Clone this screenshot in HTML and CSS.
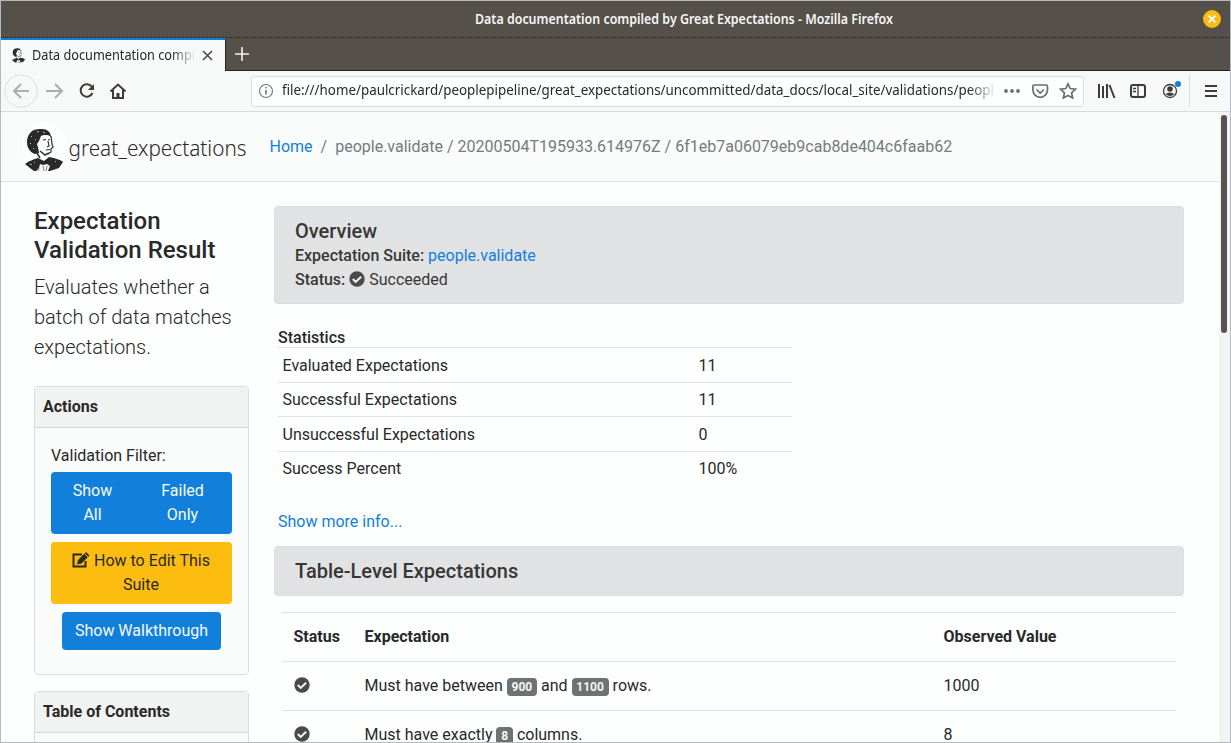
FILE: index.html
```html
<!DOCTYPE html>
<html lang="en">
<head>
<meta charset="utf-8">
<title>Data documentation compiled by Great Expectations</title>
<link rel="stylesheet" href="styles.css">
</head>
<body>
<svg class="defs" width="0" height="0">
  <symbol id="portrait" viewBox="0 0 38 43">
    <path d="M6 3C9 0 13 0 17 0c5 0 9 3 9 8l-5-2-5 1 1 4-3 2-1 4 1 7-4 1C5 23 2 19 2 13c0-4 1-7 4-10z" fill="#292929"/>
    <path d="M16 7q5-2 9 0l1 6 2 5-2 1-1 5-5 1-4-3-3-3-1-4 2-3z" fill="#fbfcfc"/>
    <path d="M18 11l3-.500M23 11l2-.500M23 12l1 5-2 1M21 21l4-.500M26 7l1 8 1 3-2 2v3l-3 2" stroke="#333" fill="none" stroke-width="1.200"/>
    <path d="M12 17v7l3 5M15 22l5 4 4-2" stroke="#333" fill="none" stroke-width="1.600"/>
    <path d="M0 35c4-3 7-4 13-6l6 3 5-4 5 1c4 2 6 1 9 4l-4 6-9 3H9l-4-3z" fill="#292929"/>
    <path d="M15 35l3 1 4-1 3 2-2 5-6 1-6-1 3-3z" fill="#f4f5f5"/>
    <path d="M18 37l1 5M22 37l-1 5M14 39l-1 3" stroke="#888"/>
    <path d="M6 8l1-1M5 14l1 1M12 3l2-.500M18 3l2 1M10 11l1-1M8 19l1 1M9 33l1 1M5 35l2 1M30 32l1 1" stroke="#b5b9ba"/>
  </symbol>
  <symbol id="check" viewBox="0 0 16 16">
    <circle cx="8" cy="8" r="7.700" fill="#4c4a48"/>
    <path d="M3.800 8.100l2.900 2.800 5.400-5.200" fill="none" stroke="#f2f2f2" stroke-width="2.100"/>
  </symbol>
</svg>
<div class="window">
  <div class="titlebar">
    <svg class="title" width="424" height="24"><text x="1" y="17" textLength="418" lengthAdjust="spacingAndGlyphs">Data documentation compiled by Great Expectations - Mozilla Firefox</text></svg>
    <svg class="close" width="20" height="20" viewBox="0 0 20 20"><circle cx="10" cy="10" r="9" fill="#fcbd10"/><path d="M6.500 6.500l7 7m0-7l-7 7" stroke="#f5f5f5" stroke-width="2"/></svg>
  </div>
  <div class="tabs">
    <div class="tab">
      <svg class="favicon" width="13" height="15"><use href="#portrait"/></svg>
      <svg class="tab-label" width="165" height="24"><text x="1" y="16" textLength="163" lengthAdjust="spacingAndGlyphs">Data documentation compi</text></svg>
      <svg class="tab-close" width="11" height="11" viewBox="0 0 11 11"><path d="M1 1l9 9m0-9l-9 9" stroke="#4a4a4a" stroke-width="1.600"/></svg>
    </div>
    <svg class="plus" width="14" height="14"><path d="M7 0v14M0 7h14" stroke="#f2f2f2" stroke-width="1.600"/></svg>
  </div>
  <div class="toolbar">
    <svg class="nav-icons" width="130" height="40" viewBox="0 0 130 40" fill="none" stroke-width="2">
      <circle cx="20" cy="20" r="16.300" stroke="#dcdedf" stroke-width="1"/>
      <path d="M28 20H13m7-7l-7 7 7 7" stroke="#a9afb2"/>
      <path d="M45 20h15m-6-7l7 7-7 7" stroke="#a9afb2"/>
      <path d="M91 16a6.200 6.200 0 1 0 .5 6" stroke="#3f3b38"/>
      <path d="M93 13v6h-6z" fill="#3f3b38"/>
      <path d="M109.500 20.500l7.500-7 7.500 7M112 19v8h10v-8" stroke="#3f3b38"/>
      <path d="M117 27v-5" stroke="#3f3b38" stroke-width="3"/>
    </svg>
    <div class="urlbar">
      <svg width="16" height="16" viewBox="0 0 16 16" fill="none" stroke="#777" stroke-width="1.100"><circle cx="8" cy="8" r="6.500"/><path d="M8 7v4.500M8 4v1.500" stroke-width="1.600"/></svg>
      <svg class="url" width="716" height="24"><text x="1" y="16" textLength="712" lengthAdjust="spacingAndGlyphs">file:///home/paulcrickard/peoplepipeline/great_expectations/uncommitted/data_docs/local_site/validations/peopl</text></svg>
      <svg class="url-icons" width="76" height="18" viewBox="0 0 76 18" fill="none" stroke="#6b6f71" stroke-width="1.700">
        <g fill="#6b6f71" stroke="none"><circle cx="3" cy="9" r="1.900"/><circle cx="9" cy="9" r="1.900"/><circle cx="15" cy="9" r="1.900"/></g>
        <path d="M31 3h12q1.500 0 1.500 1.500V8a7.300 7.300 0 0 1-14.600 0V4.500Q29.900 3 31 3zM33.500 7.500l3.700 3.500 3.700-3.500"/>
        <path d="M65 1.800l2.200 4.700 5.200.7-3.800 3.600 1 5.200-4.600-2.500-4.600 2.500 1-5.200-3.800-3.600 5.200-.7z"/>
      </svg>
    </div>
    <svg class="tool-icons" width="140" height="40" viewBox="0 0 140 40" fill="none" stroke="#3f3b38" stroke-width="2">
      <path d="M12 13v14M16 15v12M20 13v14M22.500 14l5 13"/>
      <rect x="44" y="14" width="14" height="12" rx="2"/><path d="M51 14v12M46 17.500h3M46 20.500h3" stroke-width="1.300"/>
      <circle cx="83" cy="20" r="6.500" stroke-width="1.300"/><circle cx="83" cy="18" r="2.800" fill="#3f3b38" stroke="none"/><path d="M78.500 23q4.500-3 9 0-4.500 4-9 0" fill="#3f3b38" stroke="none"/>
      <circle cx="91" cy="13" r="3" fill="#1280db" stroke="none"/>
      <path d="M102.500 3v33" stroke="#dddfe0" stroke-width="1"/>
      <path d="M118 15h12M118 20h12M118 25h12"/>
    </svg>
  </div>
  <div class="viewport">
    <div class="page">
      <header class="navbar">
        <svg class="brand" width="226" height="52"><circle cx="21" cy="26" r="24" fill="#fdfefe"/><use href="#portrait" x="2" y="8" width="38" height="43"/><text x="45.500" y="35" textLength="178" lengthAdjust="spacingAndGlyphs">great_expectations</text></svg>
        <nav class="crumbs"><a>Home</a><span class="slash">/</span><span>people.validate / 20200504T195933.614976Z / 6f1eb7a06079eb9cab8de404c6faab62</span></nav>
      </header>
      <div class="columns">
        <aside class="sidebar">
          <h4>Expectation Validation Result</h4>
          <p class="lead">Evaluates whether a batch of data matches expectations.</p>
          <section class="card">
            <div class="card-header">Actions</div>
            <div class="card-body">
              <div>Validation Filter:</div>
              <div class="group"><span>Show<br>All</span><span>Failed<br>Only</span></div>
              <div class="btn warning"><svg width="18" height="16" viewBox="0 0 18 16"><path d="M10 2.500H1.500v12h12V9" fill="none" stroke="#292929" stroke-width="2"/><path d="M6 8l8-8 3.500 3.500-8 8L5 12.500z" fill="#292929"/><path d="M12.500 1.500L16 5" stroke="#fcbd10"/></svg> How to Edit This<br>Suite</div>
              <div class="btn walk">Show Walkthrough</div>
            </div>
          </section>
          <section class="card"><div class="card-header">Table of Contents</div><div class="card-body"></div></section>
        </aside>
        <main class="main">
          <section class="banner overview">
            <h5>Overview</h5>
            <div><strong>Expectation Suite:</strong> <a>people.validate</a></div>
            <div><strong>Status:</strong> <svg class="ok" width="16" height="16"><use href="#check"/></svg> Succeeded</div>
          </section>
          <section class="statistics">
            <h6>Statistics</h6>
            <div class="stat"><span>Evaluated Expectations</span><span>11</span></div>
            <div class="stat"><span>Successful Expectations</span><span>11</span></div>
            <div class="stat"><span>Unsuccessful Expectations</span><span>0</span></div>
            <div class="stat"><span>Success Percent</span><span>100%</span></div>
            <a class="more">Show more info...</a>
          </section>
          <section class="banner level"><h5>Table-Level Expectations</h5></section>
          <section class="results">
            <div class="row head"><span>Status</span><span>Expectation</span><span>Observed Value</span></div>
            <div class="row"><svg width="16" height="16"><use href="#check"/></svg><span>Must have between <b class="badge">900</b> and <b class="badge">1100</b> rows.</span><span>1000</span></div>
            <div class="row"><svg width="16" height="16"><use href="#check"/></svg><span>Must have exactly <b class="badge">8</b> columns.</span><span>8</span></div>
          </section>
        </main>
      </div>
    </div>
    <div class="scrollbar"><div class="thumb"></div></div>
  </div>
</div>
</body>
</html>
```
FILE: styles.css
```css
* { box-sizing: border-box; }
body { margin: 0; overflow: hidden; font: 16px/24px Roboto, sans-serif; color: #292929; background: #fdfefe; }
svg { display: block; flex: none; }
.defs { position: absolute; }
.window { width: 1231px; height: 743px; border: 1px solid #b4babf; display: flex; flex-direction: column; overflow: hidden; }
.titlebar { height: 37px; flex: none; background: #555049; border-bottom: 1px dotted #24211e; display: flex; align-items: center; padding: 0 8px 0 473px; justify-content: space-between; }
.title text { font: 600 14px "Noto Sans", sans-serif; fill: #f5f6f6; }
.tabs { height: 33px; flex: none; background: #555049; border-bottom: 1px solid #272320; display: flex; align-items: center; }
.tab { width: 225px; height: 33px; background: #f8f9f9; border-top: 2px solid #1280db; border-right: 1px solid #272320; display: flex; align-items: center; padding-left: 11px; align-self: flex-start; }
.tab-label { margin-left: 6px; -webkit-mask-image: linear-gradient(90deg, #000 85%, transparent); mask-image: linear-gradient(90deg, #000 85%, transparent); }
.tab-label text, .url text { font: 14px "Noto Sans", sans-serif; fill: #292929; }
.tab-close { margin-left: 6px; }
.plus { margin-left: 9px; }
.toolbar { height: 41px; flex: none; background: #f7f8f8; border-bottom: 1px solid #d8dadb; display: flex; align-items: center; }
.urlbar { width: 833px; height: 31px; margin-left: 120px; border: 1px solid #dcdedf; border-radius: 3px; background: #fdfefe; display: flex; align-items: center; padding-left: 6px; }
.url { margin-left: 7px; -webkit-mask-image: linear-gradient(90deg, #000 96%, transparent); mask-image: linear-gradient(90deg, #000 96%, transparent); }
.url-icons { margin-left: 6px; }
.tool-icons { margin-left: 3px; }
.viewport { flex: 1; min-height: 0; display: flex; }
.page { width: 1218px; flex: none; overflow: hidden; }
.scrollbar { width: 11px; background: #f2f3f3; padding: 3px 3px 0 2px; }
.thumb { width: 6px; height: 218px; border-radius: 3px; background: #57534e; }
.navbar { height: 70px; background: #fafbfb; border-bottom: 1px solid #dfe1e2; display: flex; align-items: center; padding-left: 22px; }
.brand text { font: 350 21px "Noto Sans", sans-serif; fill: #292929; }
.crumbs { margin-left: 20.500px; color: #747c80; display: flex; }
.slash { margin: 0 8px; }
a { color: #1280db; }
.columns { display: flex; }
.sidebar { width: 215px; margin-left: 33px; padding-top: 25px; flex: none; }
h4, h5, h6, p { margin: 0; font-weight: 500; }
h4 { font-size: 24px; line-height: 29px; margin-bottom: 7px; }
.lead { font-size: 20px; line-height: 30px; font-weight: 300; margin-bottom: 24px; }
.card { border: 1px solid #dadcdd; border-radius: 4px; background: #fafbfb; margin-bottom: 16px; }
.card-header { height: 41px; background: #f1f2f2; border-bottom: 1px solid #d6d8db; font-weight: 700; padding: 8px; }
.card-body { padding: 16px 16px 24px; }
.group { display: flex; height: 62px; margin: 4px 0 8px; border-radius: 4px; background: #1280db; color: #f5f9fd; text-align: center; padding: 7px 0; }
.group span { width: 83px; }
.group span + span { width: 97px; }
.btn { border-radius: 4px; text-align: center; padding: 7px 0; }
.warning { height: 62px; background: #fcbd10; margin-bottom: 8px; padding-right: 1px; }
.warning svg { display: inline-block; vertical-align: -2px; }
.walk { width: 159px; height: 38px; margin: 0 auto; background: #1280db; color: #f5f9fd; }
.main { margin-left: 25px; padding-top: 24px; width: 910px; }
.banner { background: #e1e2e4; border: 1px solid #dcdddf; border-radius: 4px; padding-left: 20px; color: #383735; }
.banner strong { font-weight: 500; }
.overview { height: 98px; padding-top: 12px; }
h5 { font-size: 20px; line-height: 24px; }
.overview h5 { margin-bottom: 1px; }
.ok { display: inline-block; vertical-align: -2px; }
.statistics { margin: 24px 0 0 4px; width: 514px; }
h6 { font-size: 16px; line-height: 20px; height: 19px; }
.stat { height: 34.500px; border-top: 1px solid #dfe1e2; display: grid; grid-template-columns: 416px 1fr; padding: 6px 0 0 4.500px; }
.stat:nth-child(odd) { padding-top: 5px; }
.more { display: block; margin-top: 25px; }
.level { height: 50px; margin-top: 12px; padding-top: 12px; }
.results { margin: 16px 8px 0; }
.row { height: 49px; border-top: 1px solid #dfe1e2; display: grid; grid-template-columns: 71px 579px 1fr; padding: 12px 0 0 11.500px; }
.row svg { margin-top: 3px; }
.head { font-weight: 700; }
.badge { display: inline-block; font-size: 12px; line-height: 12px; font-weight: 700; color: #f5f6f6; background: #6d7272; border-radius: 4px; padding: 3px 4.800px; }
```
